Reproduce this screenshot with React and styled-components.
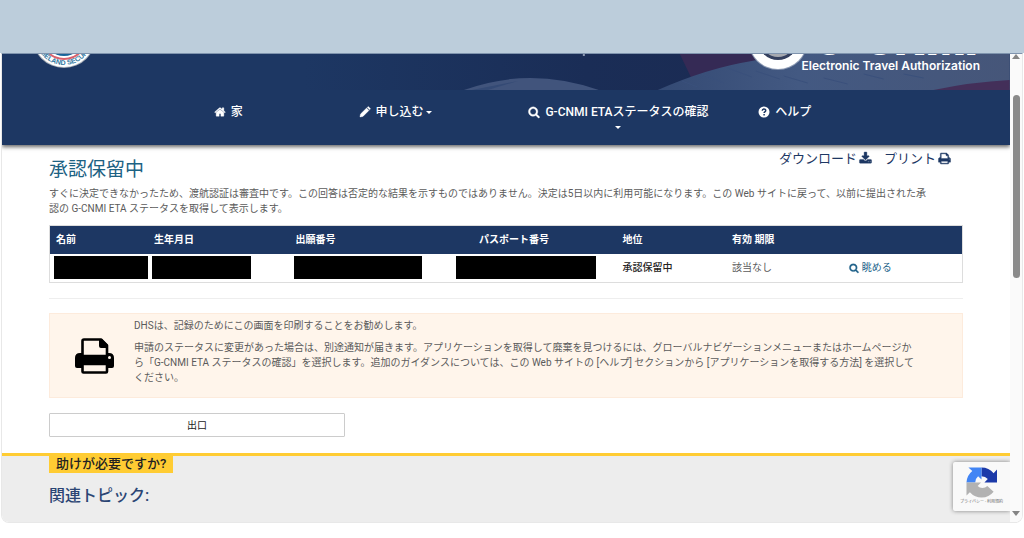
import React from 'react';
import styled, { createGlobalStyle } from 'styled-components';

const GlobalStyle = createGlobalStyle`
  * {
    box-sizing: border-box;
  }
  body {
    margin: 0;
    background-color: #fff;
    color: #5b5b5b;
    font-family: Roboto, 'Noto Sans CJK JP', sans-serif;
    font-size: 10px;
    line-height: 15px;
  }
  h1, h2, p {
    margin: 0;
  }
  a {
    text-decoration: none;
  }
`;

const TopBand = styled.div`
  height: 53px;
  background-color: #bccddb;
`;

const Frame = styled.div`
  display: flex;
  margin: 0 1px;
  border: 1px solid #e8e8e8;
  border-top-color: #7f94ae;
  border-radius: 0 0 8px 8px;
  overflow: hidden;
`;

const Page = styled.div`
  position: relative;
  flex: 1;
  min-width: 0;
  overflow: hidden;
`;

const Header = styled.header`
  background-color: #1d3763;
  box-shadow: 0 2px 4px rgba(0, 0, 0, 0.6);
`;

const Hero = styled.div`
  position: relative;
  display: flex;
  justify-content: space-between;
  height: 36px;
  padding: 0 30px;
  overflow: hidden;
`;

const FlagArt = styled.svg`
  position: absolute;
  top: 0;
  right: 0;
  width: 70%;
  height: 36px;
`;

const Seal = styled.svg`
  position: relative;
  flex: none;
`;

const Brand = styled.div`
  position: relative;
  display: flex;
`;

const BrandText = styled.div`
  display: flex;
  flex-direction: column;
  justify-content: flex-end;
  height: 20px;
  margin-left: -6px;
  color: #fff;
  font-family: Inter, sans-serif;
  font-weight: 600;
  font-size: 12px;
  line-height: 16px;
  white-space: nowrap;
`;

const BrandName = styled.strong`
  padding-left: 12px;
  font-size: 41px;
  line-height: 36px;
`;

const Nav = styled.nav`
  display: grid;
  grid-template-columns: 145fr 170fr 230fr 252fr;
  justify-items: start;
  height: 55px;
  padding: 13px 0 0 21%;
`;

const NavLink = styled.a`
  display: flex;
  flex-direction: ${({ $stacked }) => ($stacked ? 'column' : 'row')};
  align-items: center;
  height: ${({ $stacked }) => ($stacked ? '30px' : '18px')};
  color: #fff;
  font-size: 12px;
  font-weight: 500;
  line-height: 18px;
  white-space: nowrap;
`;

const NavLabel = styled.span`
  display: flex;
  align-items: center;
  gap: 5px;
`;

const Caret = styled.span`
  margin: ${({ $below }) => ($below ? '5px 0 0' : '0 0 0 2px')};
  border: 3px solid transparent;
  border-top-color: currentColor;
  border-bottom: 0;
`;

const Main = styled.main`
  padding: 5px 47px 16px;
`;

const TitleRow = styled.div`
  display: flex;
  justify-content: space-between;
  height: 36px;
`;

const Title = styled.h1`
  padding-top: 8px;
  color: #1c6283;
  font-size: 19px;
  font-weight: 400;
  line-height: 24px;
`;

const Actions = styled.div`
  display: flex;
  gap: 12px;
  padding-right: 12px;
`;

const Action = styled.a`
  display: flex;
  align-items: center;
  gap: 2px;
  height: 16px;
  color: #1d3763;
  font-size: 13px;
`;

const Table = styled.table`
  width: 100%;
  margin-top: 9px;
  border: 1px solid #ddd;
  border-collapse: collapse;
  table-layout: fixed;
`;

const Th = styled.th`
  width: ${({ $width }) => $width};
  height: 28px;
  padding: 0 0 0 ${({ $indent }) => ($indent ? '27px' : '6px')};
  background-color: #1d3763;
  color: #fff;
  font-weight: 700;
  text-align: left;
`;

const Td = styled.td`
  height: 29px;
  padding: 0 0 0 ${({ $redacted }) => ($redacted ? '4px' : '6px')};
  color: ${({ $strong }) => ($strong ? '#222' : '#5b5b5b')};
  font-weight: ${({ $strong }) => ($strong ? 500 : 400)};
`;

const Redaction = styled.div`
  width: ${({ $width }) => $width};
  height: 23px;
  background-color: #000;
`;

const ViewLink = styled.a`
  display: flex;
  align-items: center;
  gap: 3px;
  color: #22638a;
`;

const Divider = styled.hr`
  margin: 15px 0 14px;
  border: 0;
  border-top: 1px solid #eee;
`;

const Notice = styled.section`
  display: flex;
  align-items: center;
  gap: 20px;
  min-height: 85px;
  padding: 4px 14px 12px 25px;
  border: 1px solid #fdebdc;
  background-color: #fff5eb;
`;

const NoticeIcon = styled.div`
  display: flex;
  flex: none;
  padding-top: 8px;
`;

const NoticeText = styled.div`
  display: grid;
  gap: 7px;
`;

const ButtonGrid = styled.div`
  display: grid;
  grid-template-columns: repeat(3, 1fr);
  gap: 13px;
  margin-top: 15px;
`;

const ExitButton = styled.button`
  height: 24px;
  padding: 0;
  border: 1px solid #ccc;
  border-radius: 1px;
  background-color: #fff;
  color: #222;
  font: inherit;
`;

const HelpFooter = styled.footer`
  min-height: 69px;
  padding: 0 47px;
  border-top: 3px solid #fc3;
  background-color: #ededed;
`;

const HelpTag = styled.div`
  width: fit-content;
  padding: 0 7px 1px;
  background-color: #fc3;
  color: #222;
  font-size: 13px;
  font-weight: 500;
  line-height: 16px;
`;

const Topics = styled.h2`
  margin-top: 12px;
  color: #2b4574;
  font-size: 16px;
  font-weight: 500;
  line-height: 22px;
`;

const Captcha = styled.aside`
  position: absolute;
  right: 0;
  bottom: 11px;
  display: flex;
  flex-direction: column;
  align-items: center;
  width: 57px;
  height: 49px;
  padding: 5px 0 0;
  border-radius: 2px 0 0 2px;
  background-color: #f9f9f9;
  box-shadow: 0 0 4px #808080;
  color: #666;
  font-size: 4px;
  line-height: 8px;
  white-space: nowrap;
`;

const Scrollbar = styled.div`
  display: flex;
  flex-direction: column;
  align-items: center;
  width: 12px;
  background-color: #fafafa;
`;

const Arrow = styled.span`
  margin: ${({ $down }) => ($down ? 'auto 0 6px' : '0')};
  border: 4px solid transparent;
  border-${({ $down }) => ($down ? 'top' : 'bottom')}: 5px solid #858585;
  border-${({ $down }) => ($down ? 'bottom' : 'top')}: 0;
`;

const Thumb = styled.span`
  width: 7px;
  height: 39%;
  margin-top: 36px;
  border-radius: 4px;
  background-color: #8a8a8a;
`;

const iconPaths = {
  home: 'M1472 992v480q0 26-19 45t-45 19h-384v-384h-256v384h-384q-26 0-45-19t-19-45v-480q0-1 .5-3t.5-3l575-474 575 474q1 2 1 6zm223-69l-62 74q-8 9-21 11h-3q-13 0-21-7l-692-577-692 577q-12 8-24 7-13-2-21-11l-62-74q-8-10-7-23.5t11-21.5l719-599q32-26 76-26t76 26l244 204v-195q0-14 9-23t23-9h192q14 0 23 9t9 23v408l219 182q10 8 11 21.5t-7 23.5z',
  pencil:
    'M1130 300l360 360-900 900-430 90q-28 4-24-24l90-430zM1220 210l110-110q46-46 92 0l270 270q46 46 0 92l-110 110z',
  search:
    'M1216 832q0-185-131.5-316.5t-316.5-131.5-316.5 131.5-131.5 316.5 131.5 316.5 316.5 131.5 316.5-131.5 131.5-316.5zm512 832q0 52-38 90t-90 38q-54 0-90-38l-343-342q-179 124-399 124-143 0-273.5-55.5t-225-150-150-225-55.5-273.5 55.5-273.5 150-225 225-150 273.5-55.5 273.5 55.5 225 150 150 225 55.5 273.5q0 220-124 399l343 343q37 37 37 90z',
  download:
    'M1344 1344q0-26-19-45t-45-19-45 19-19 45 19 45 45 19 45-19 19-45zm256 0q0-26-19-45t-45-19-45 19-19 45 19 45 45 19 45-19 19-45zm128-224v320q0 40-28 68t-68 28h-1472q-40 0-68-28t-28-68v-320q0-40 28-68t68-28h465l135 136q58 56 136 56t136-56l136-136h464q40 0 68 28t28 68zm-325-569q17 41-14 70l-448 448q-18 19-45 19t-45-19l-448-448q-31-29-14-70 17-39 59-39h256v-448q0-26 19-45t45-19h256q26 0 45 19t19 45v448h256q42 0 59 39z',
  print:
    'M448 1536h896v-256h-896v256zm0-640h896v-384h-160q-40 0-68-28t-28-68v-160h-640v640zm1152 64q0-26-19-45t-45-19-45 19-19 45 19 45 45 19 45-19 19-45zm128 0v416q0 13-9.5 22.5t-22.5 9.5h-224v160q0 40-28 68t-68 28h-960q-40 0-68-28t-28-68v-160h-224q-13 0-22.5-9.5t-9.5-22.5v-416q0-79 56.5-135.5t135.5-56.5h64v-544q0-40 28-68t68-28h672q40 0 88 20t76 48l152 152q28 28 48 76t20 88v256h64q79 0 135.5 56.5t56.5 135.5z',
};

const Icon = ({ name, size = 12 }) => (
  <svg
    width={size}
    height={size}
    viewBox="0 0 1792 1792"
    fill="currentColor"
    stroke="currentColor"
    strokeWidth="50"
    overflow="visible"
    aria-hidden="true"
  >
    <path d={iconPaths[name]} />
  </svg>
);

const QuestionIcon = () => (
  <svg width="12" height="12" viewBox="0 0 24 24" aria-hidden="true">
    <circle cx="12" cy="12" r="11" fill="#fff" />
    <path
      d="M8.5 9.5C8.5 5 15.5 5 15.5 9.2c0 2.8-3.3 2.6-3.3 5M12.2 16v3"
      fill="none"
      stroke="#1d3763"
      strokeWidth="3"
    />
  </svg>
);

const HeroArt = () => (
  <FlagArt viewBox="0 0 706 36" preserveAspectRatio="none" aria-hidden="true">
    <defs>
      <linearGradient id="night">
        <stop offset="0" stopColor="#1d3763" />
        <stop offset="0.4" stopColor="#1a2d56" />
        <stop offset="0.65" stopColor="#1b2b53" />
        <stop offset="1" stopColor="#3b5078" />
      </linearGradient>
      <linearGradient id="cloth">
        <stop offset="0" stopColor="#344a74" />
        <stop offset="0.4" stopColor="#435982" />
        <stop offset="1" stopColor="#465679" />
      </linearGradient>
    </defs>
    <rect width="706" height="36" fill="url(#night)" />
    <path d="M376 0h100l-28 8-60 17z" fill="#352a55" />
    <path d="M354 36q50-22 94-29 30-7 60-7h198v36z" fill="url(#cloth)" />
    <path d="M160 36q66-24 135 0z" fill="#41547c" />
    <path d="M168 36l46-9-30 9z" fill="#344a75" />
    <path
      d="M378 27l16 6M398 20l22 9M424 14l24 9M452 17l24 8M480 22l24 7M520 24l24 6M560 20l20 5M600 20l20 4"
      fill="none"
      stroke="#3a507b"
    />
    <path d="M280 0v2" stroke="#8c9ab3" strokeWidth="2" />
    <path d="M630 36q38-8 76-10v10z" fill="#432f59" />
  </FlagArt>
);

const DhsSeal = () => (
  <Seal width="64" height="15" viewBox="0 49 64 15" aria-hidden="true">
    <circle cx="32" cy="31" r="32" fill="#a9b0b8" />
    <circle cx="32" cy="31" r="31" fill="#fff" />
    <circle cx="32" cy="31" r="24" fill="#d9616c" />
    <circle cx="32" cy="31" r="22" fill="#fff" />
    <circle cx="32" cy="31" r="20" fill="#17649a" />
    <path id="seal-ring" d="M3 31a29 29 0 0 0 58 0" fill="none" />
    <text fill="#31779f" fontFamily="Liberation Sans" fontSize="7" fontWeight="700">
      <textPath href="#seal-ring" startOffset="50%" textAnchor="middle">
        HOMELAND SECURITY
      </textPath>
    </text>
  </Seal>
);

const CnmiSeal = () => (
  <Seal width="60" height="17" viewBox="0 43 60 17" aria-hidden="true">
    <circle cx="30" cy="29" r="30" fill="#8c9ab3" />
    <circle cx="30" cy="29" r="29" fill="#fff" />
    <circle cx="30" cy="29" r="20" fill="#34405f" />
    <circle cx="30" cy="29" r="17" fill="#a6a9b0" />
  </Seal>
);

const CaptchaLogo = () => (
  <svg width="31" height="31" viewBox="0 0 64 64" aria-label="reCAPTCHA">
    <path
      d="M64 32V5l-7 8A32 32 0 0 0 32 1v18q8 0 13 6l-7 7z"
      fill="#1c3aa9"
    />
    <path d="M32 1H5l8 7A32 32 0 0 0 1 32h18q0-8 6-13l7 7z" fill="#4285f4" />
    <path
      d="M1 32v27l7-7a32 32 0 0 0 49-1L44 39a14 14 0 0 1-20 0l7-7z"
      fill="#b2b2b2"
    />
  </svg>
);

const PrinterIcon = () => (
  <svg width="39" height="36" viewBox="0 0 39 36" aria-hidden="true">
    <path d="M5 15h29q5 0 5 5v8q0 2-2 2H2q-2 0-2-2v-8q0-5 5-5z" />
    <path
      d="M7.5 18V3q0-1.500 1.500-1.500h17l6 6V18z"
      fill="#fff5eb"
      stroke="#000"
      strokeWidth="2.600"
      strokeLinejoin="round"
    />
    <path d="M24 1h3l6 6v3h-7q-2 0-2-2zM7 17h25v9H7z" />
    <rect
      x="7.5"
      y="26"
      width="24.500"
      height="8.500"
      rx="1"
      fill="#fff5eb"
      stroke="#000"
      strokeWidth="2.600"
    />
    <circle cx="34.500" cy="19.500" r="1.500" fill="#fff5eb" />
  </svg>
);

const columns = [
  { label: '名前', width: '10.8%' },
  { label: '生年月日', width: '15.5%' },
  { label: '出願番号', width: '17.8%' },
  { label: 'パスポート番号', width: '18%', indent: true },
  { label: '地位', width: '12%' },
  { label: '有効 期限', width: '12.8%' },
  { label: '', width: 'auto' },
];

const redactions = ['94px', '99px', '128px', '140px'];

const App = () => (
  <>
    <GlobalStyle />
    <TopBand />
    <Frame>
      <Page lang="ja">
        <Header>
          <Hero>
            <HeroArt />
            <DhsSeal />
            <Brand>
              <CnmiSeal />
              <BrandText>
                <BrandName>G-CNMI</BrandName>
                <span>Electronic Travel Authorization</span>
              </BrandText>
            </Brand>
          </Hero>
          <Nav>
            <NavLink href="#home">
              <NavLabel>
                <Icon name="home" />家
              </NavLabel>
            </NavLink>
            <NavLink href="#apply">
              <NavLabel>
                <Icon name="pencil" />
                申し込む
              </NavLabel>
              <Caret />
            </NavLink>
            <NavLink href="#status" $stacked>
              <NavLabel>
                <Icon name="search" />
                G-CNMI ETAステータスの確認
              </NavLabel>
              <Caret $below />
            </NavLink>
            <NavLink href="#help">
              <NavLabel>
                <QuestionIcon />
                ヘルプ
              </NavLabel>
            </NavLink>
          </Nav>
        </Header>

        <Main>
          <TitleRow>
            <Title>承認保留中</Title>
            <Actions>
              <Action href="#download">
                ダウンロード
                <Icon name="download" size={13} />
              </Action>
              <Action href="#print">
                プリント
                <Icon name="print" size={13} />
              </Action>
            </Actions>
          </TitleRow>
          <p>
            すぐに決定できなかったため、渡航認証は審査中です。この回答は否定的な結果を示すものではありません。決定は5日以内に利用可能になります。この
            Web サイトに戻って、以前に提出された承
            <br />
            認の G-CNMI ETA ステータスを取得して表示します。
          </p>

          <Table>
            <thead>
              <tr>
                {columns.map(({ label, width, indent }) => (
                  <Th key={width} scope="col" $width={width} $indent={indent}>
                    {label}
                  </Th>
                ))}
              </tr>
            </thead>
            <tbody>
              <tr>
                {redactions.map((width) => (
                  <Td key={width} $redacted>
                    <Redaction $width={width} />
                  </Td>
                ))}
                <Td $strong>承認保留中</Td>
                <Td>該当なし</Td>
                <Td>
                  <ViewLink href="#view">
                    <Icon name="search" size={10} />
                    眺める
                  </ViewLink>
                </Td>
              </tr>
            </tbody>
          </Table>

          <Divider />

          <Notice>
            <NoticeIcon>
              <PrinterIcon />
            </NoticeIcon>
            <NoticeText>
              <p>DHSは、記録のためにこの画面を印刷することをお勧めします。</p>
              <p>
                申請のステータスに変更があった場合は、別途通知が届きます。アプリケーションを取得して廃棄を見つけるには、グローバルナビゲーションメニューまたはホームページか
                <br />
                ら「G-CNMI ETA ステータスの確認」を選択します。追加のガイダンスについては、この Web
                サイトの [ヘルプ] セクションから [アプリケーションを取得する方法] を選択して
                <br />
                ください。
              </p>
            </NoticeText>
          </Notice>

          <ButtonGrid>
            <ExitButton type="button">出口</ExitButton>
          </ButtonGrid>
        </Main>

        <HelpFooter>
          <HelpTag>助けが必要ですか?</HelpTag>
          <Topics>関連トピック:</Topics>
        </HelpFooter>

        <Captcha>
          <CaptchaLogo />
          <span>プライバシー - 利用規約</span>
        </Captcha>
      </Page>
      <Scrollbar aria-hidden="true">
        <Arrow />
        <Thumb />
        <Arrow $down />
      </Scrollbar>
    </Frame>
  </>
);

export default App;
